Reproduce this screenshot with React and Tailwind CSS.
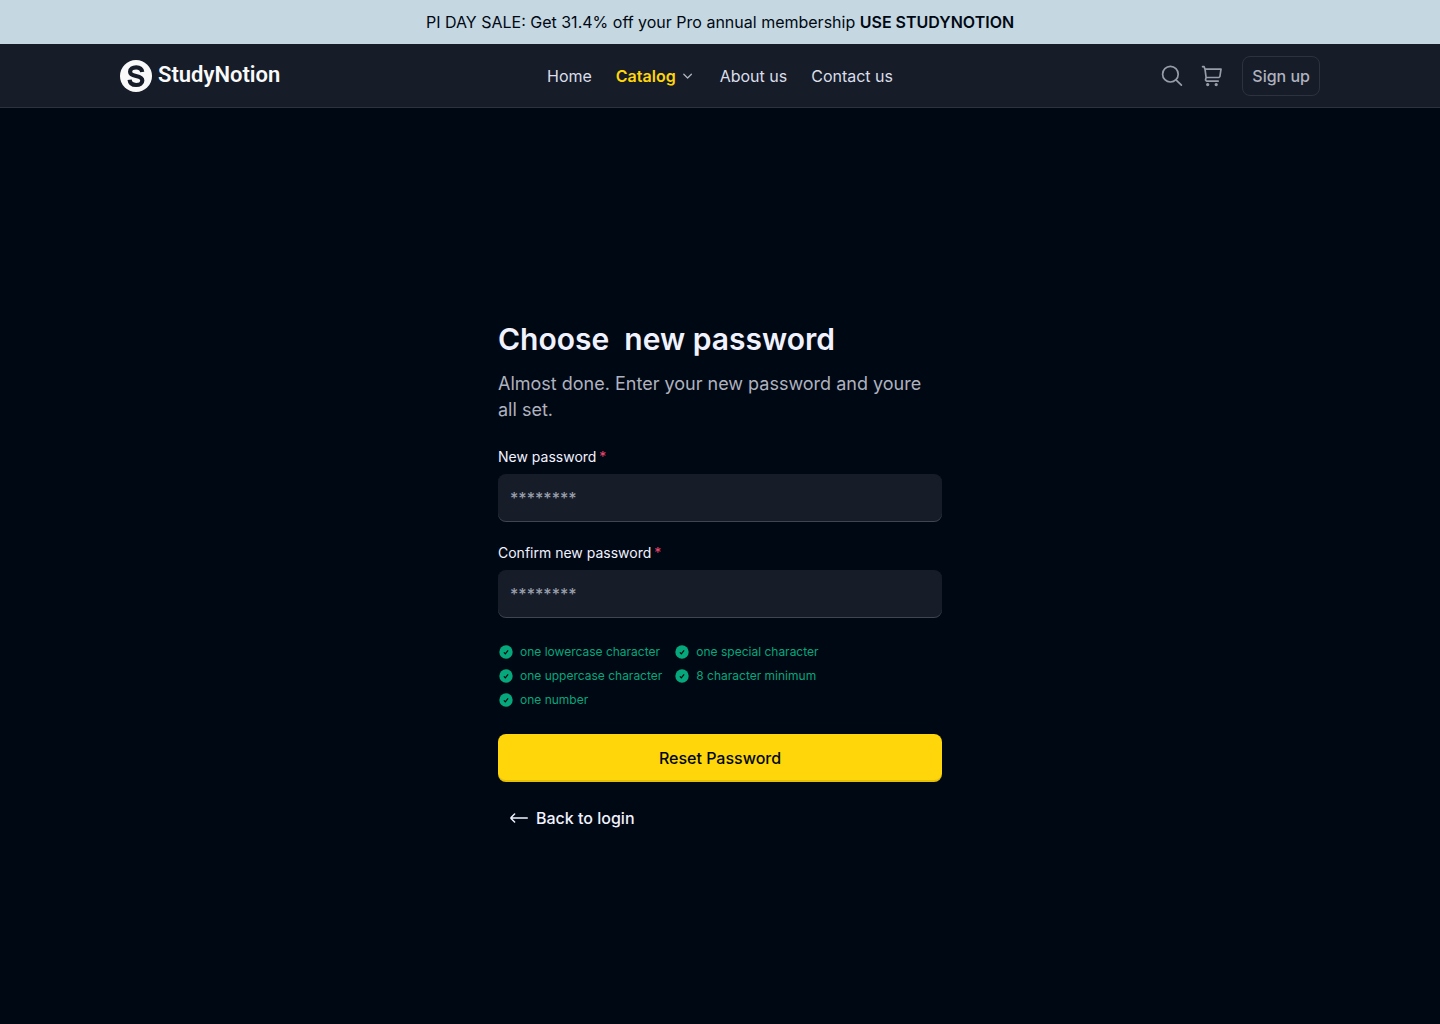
import React from 'react';

const requirements = [
  ['one lowercase character', 'one uppercase character', 'one number'],
  ['one special character', '8 character minimum'],
];

function Logo() {
  return (
    <a href="#" className="flex items-center gap-1.5 text-[#f9f9f9]">
      <svg className="size-8" viewBox="0 0 32 32" fill="none" aria-hidden="true">
        <circle cx="16" cy="16" r="16" fill="currentColor" />
        <path
          d="M22.2 12C21.8 9 19.6 7.3 16.2 7.3C12.6 7.3 10.1 8.9 10.1 11.7C10.1 14.4 12.3 15.2 16 16C20 16.8 22.3 17.7 22.3 20.4C22.3 23.3 19.8 25 16.1 25C12.3 25 9.9 23.2 9.6 19.8"
          stroke="#161d29"
          strokeWidth="4.2"
        />
      </svg>
      <span className="pb-0.5 font-['Roboto',sans-serif] text-[22px] leading-7 font-semibold">StudyNotion</span>
    </a>
  );
}

function ChevronDown() {
  return (
    <svg className="size-4" viewBox="0 0 16 16" fill="none" stroke="#afb2bf" strokeWidth="1.3" aria-hidden="true">
      <path d="M3.8 6.2l3.8 3.8 3.8-3.8" strokeLinecap="round" strokeLinejoin="round" />
    </svg>
  );
}

function SearchIcon() {
  return (
    <svg className="size-6" viewBox="0 0 24 24" fill="none" stroke="#999daa" strokeWidth="1.7" strokeLinecap="round" aria-hidden="true">
      <circle cx="10.4" cy="10.2" r="7.8" />
      <path d="M16 15.8l5.4 5.4" />
    </svg>
  );
}

function CartIcon() {
  return (
    <svg className="size-6" viewBox="0 0 24 24" fill="none" stroke="#999daa" strokeWidth="1.7" strokeLinecap="round" strokeLinejoin="round" aria-hidden="true">
      <path d="M2.6 2.7h1.5l.9 2.4h16l-1.1 7.4-1 1H6.2M5 5.1l1.1 8.4-.6 2.4.9 1.2h11.8" />
      <circle cx="7.7" cy="20.6" r="0.8" fill="#999daa" />
      <circle cx="16.2" cy="20.6" r="0.8" fill="#999daa" />
    </svg>
  );
}

function CheckIcon() {
  return (
    <svg className="size-4" viewBox="0 0 16 16" fill="none" aria-hidden="true">
      <circle cx="8" cy="8" r="6.7" fill="#05a77b" />
      <path d="M5.9 8.3l1.4 1.5 2.8-3.5" stroke="#000814" strokeWidth="1.2" />
    </svg>
  );
}

function BackArrow() {
  return (
    <svg className="h-4 w-[18px]" viewBox="0 0 18 16" fill="none" stroke="currentColor" strokeWidth="1.5" strokeLinecap="round" strokeLinejoin="round" aria-hidden="true">
      <path d="M17.3 8H1M4.6 4L1.3 7.2Q.6 8 1.3 8.8L4.6 12" />
    </svg>
  );
}

function PasswordField({ id, label }) {
  return (
    <div className="flex flex-col gap-1.5">
      <label htmlFor={id} className="text-sm leading-[22px] text-[#f1f2ff]">
        {label} <span className="-ml-px text-[#ef476f]">*</span>
      </label>
      <input
        id={id}
        type="text"
        placeholder="********"
        className="h-12 w-full rounded-lg bg-[#161d29] px-3 text-base font-medium text-[#f1f2ff] shadow-[inset_0_-1px_0_rgba(255,255,255,0.18)] outline-none placeholder:text-[#999daa]"
      />
    </div>
  );
}

export default function App() {
  return (
    <div className="min-h-screen bg-[#000814] font-['Inter',sans-serif] text-[#f1f2ff]">
      <p className="bg-[#c5d7e0] px-4 py-2.5 text-center text-base text-[#000814]">
        PI DAY SALE: Get 31.4% off your Pro annual membership <strong className="font-semibold">USE STUDYNOTION</strong>
      </p>

      <header className="border-b border-[#2c333f] bg-[#161d29]">
        <div className="mx-auto flex w-full max-w-[1200px] items-center pt-3 pb-[11px]">
          <div className="flex flex-1">
            <Logo />
          </div>
          <nav className="flex items-center gap-6 text-base text-[#dbddea]">
            <a href="#">Home</a>
            <a href="#" className="flex items-center gap-1 font-semibold text-[#ffd60a]">
              Catalog
              <ChevronDown />
            </a>
            <a href="#">About us</a>
            <a href="#">Contact us</a>
          </nav>
          <div className="flex flex-1 items-center justify-end gap-4">
            <button type="button" aria-label="Search"><SearchIcon /></button>
            <button type="button" aria-label="Cart"><CartIcon /></button>
            <button type="button" className="ml-0.5 h-10 rounded-lg border border-[#2c333f] px-[9px] text-base font-medium text-[#afb2bf]">
              Sign up
            </button>
          </div>
        </div>
      </header>

      <main className="px-4 pt-[211px] pb-12">
        <div className="mx-auto w-full max-w-[444px]">
          <h1 className="text-3xl leading-10 font-semibold whitespace-pre-wrap">{'Choose  new password'}</h1>
          <p className="mt-3 text-lg leading-[26px] text-[#afb2bf]">Almost done. Enter your new password and youre all set.</p>

          <form className="mt-[23px] flex flex-col">
            <div className="flex flex-col gap-5">
              <PasswordField id="new-password" label="New password" />
              <PasswordField id="confirm-password" label="Confirm new password" />
            </div>

            <div className="mt-6 flex gap-3 text-xs leading-5 text-[#05a77b]">
              {requirements.map((column) => (
                <ul key={column[0]} className="flex flex-col gap-1">
                  {column.map((item) => (
                    <li key={item} className="flex items-center gap-1.5">
                      <CheckIcon />
                      {item}
                    </li>
                  ))}
                </ul>
              ))}
            </div>

            <button
              type="submit"
              className="mt-6 h-12 rounded-lg bg-[#ffd60a] text-base font-medium text-[#000814] shadow-[inset_0_-2px_0_rgba(0,0,0,0.1)]"
            >
              Reset Password
            </button>
          </form>

          <a href="#" className="mt-3 inline-flex items-center gap-2 p-3 text-base font-medium">
            <BackArrow />
            Back to login
          </a>
        </div>
      </main>
    </div>
  );
}
